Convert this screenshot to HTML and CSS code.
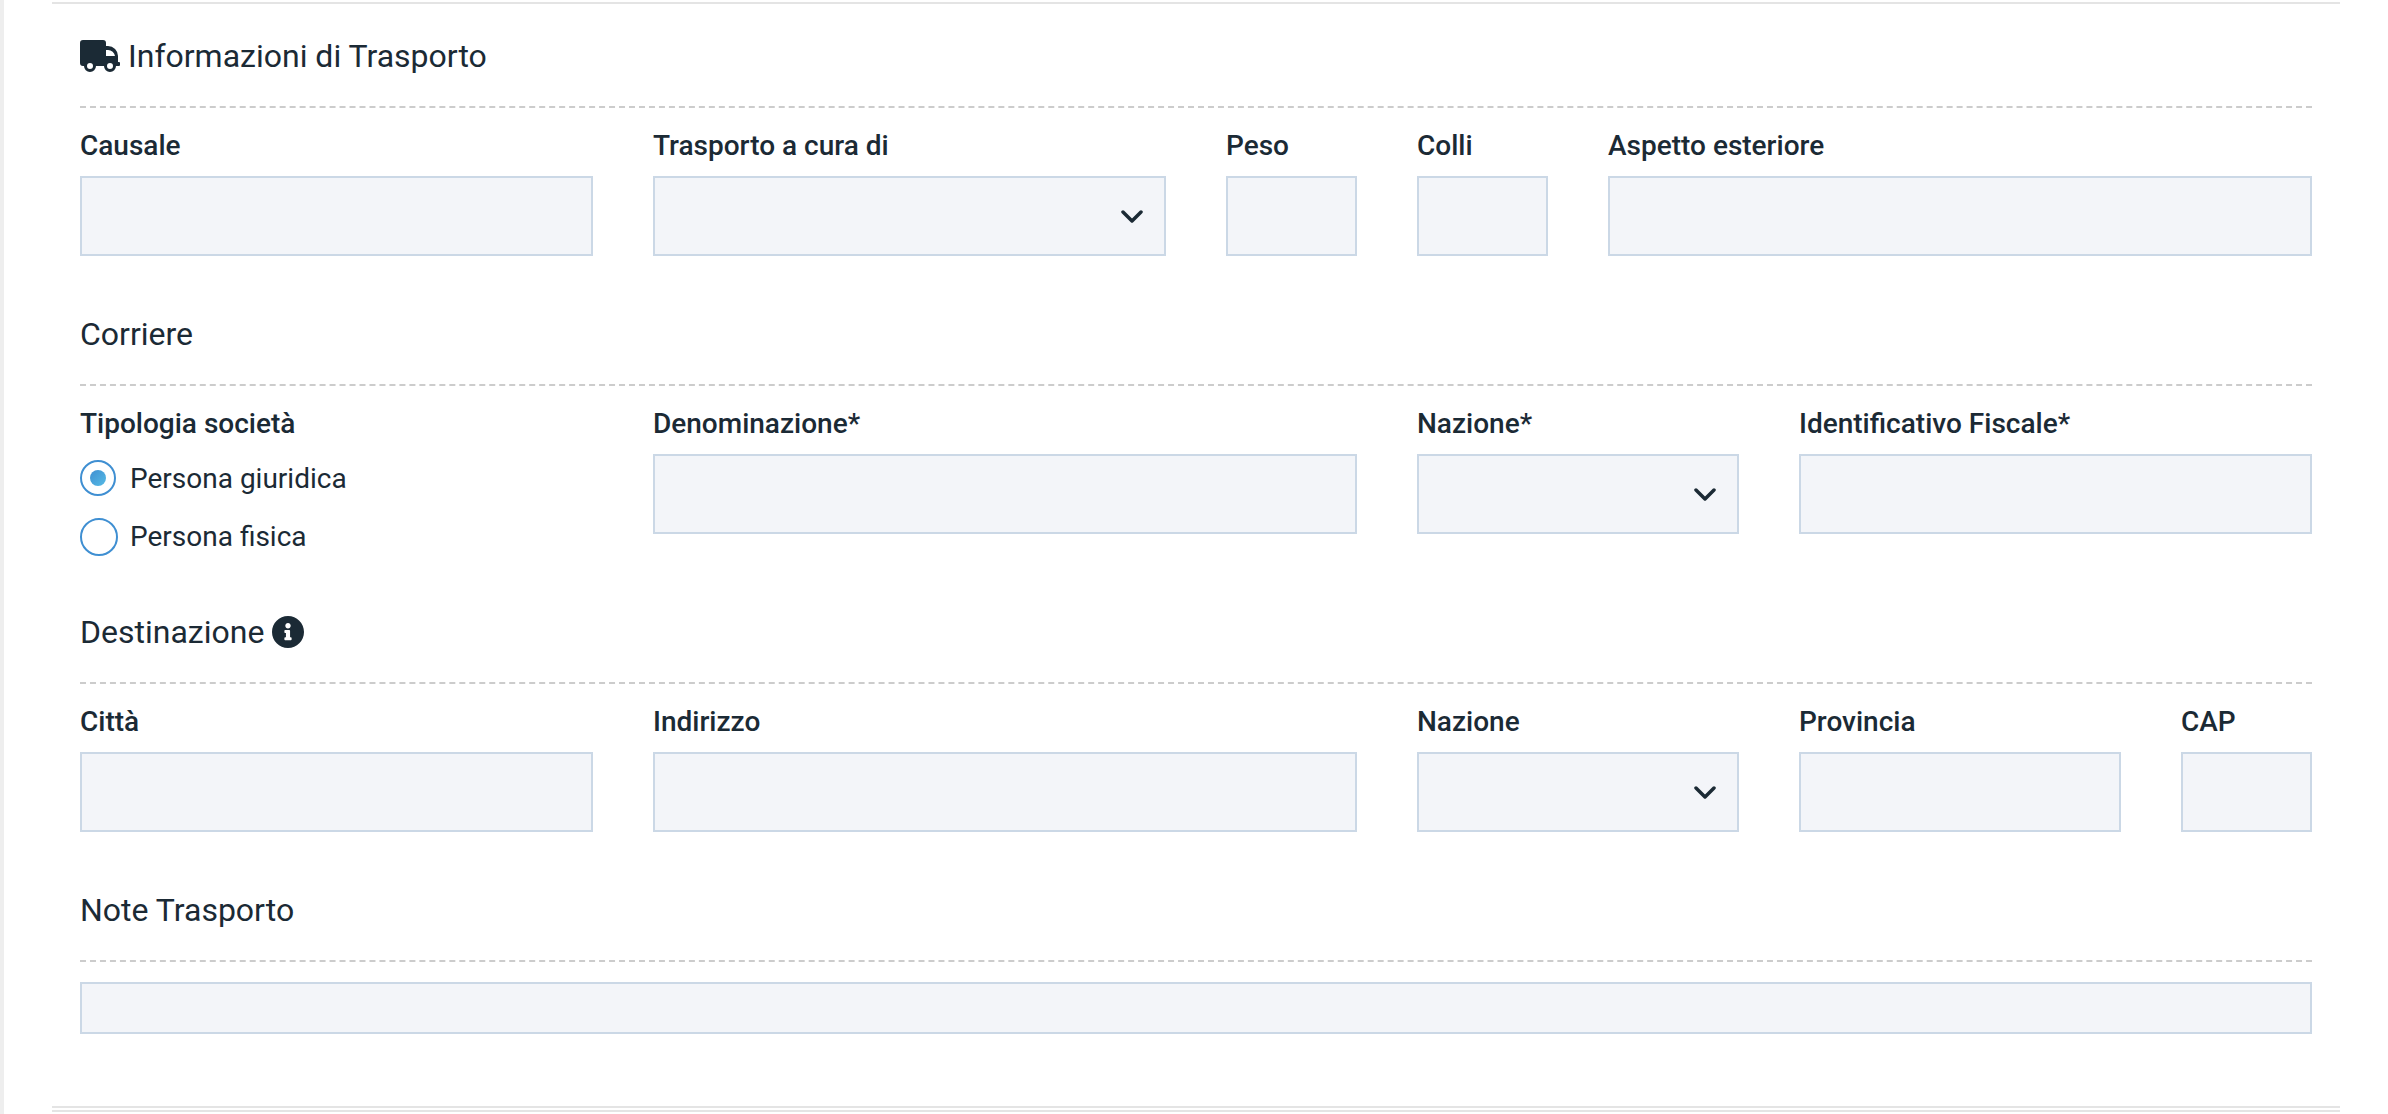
FILE: index.html
```html
<!DOCTYPE html>
<html lang="it">
	<head>
		<meta charset="utf-8">
		<meta name="viewport" content="width=device-width, initial-scale=1">
		<title>Informazioni di Trasporto</title>
		<link rel="stylesheet" href="styles.css">
	</head>
	<body>
		<form class="panel">
			<section class="section">
				<h2 class="section-title">
					<svg class="icon-truck" viewBox="0 0 40 32" aria-hidden="true">
						<path fill-rule="evenodd" d="M3 0H23a3 3 0 0 1 3 3V6H28a10 10 0 0 1 10 10V22H39a1 1 0 0 1 1 1V25a1 1 0 0 1-1 1H36a6 6 0 0 1-12 0H16a6 6 0 0 1-12 0H3a3 3 0 0 1-3-3V3a3 3 0 0 1 3-3zM26 10V16H35a7 7 0 0 0-7-6zM10 23a3 3 0 1 0 0 6 3 3 0 0 0 0-6zM30 23a3 3 0 1 0 0 6 3 3 0 0 0 0-6z"/>
					</svg>
					Informazioni di Trasporto
				</h2>
				<div class="fields">
					<div class="field col-3">
						<label for="causale">Causale</label>
						<input type="text" id="causale">
					</div>
					<div class="field col-3">
						<label for="trasporto">Trasporto a cura di</label>
						<div class="select">
							<select id="trasporto"><option></option></select>
							<svg viewBox="0 0 22 14" aria-hidden="true"><path d="M2 2l9 9 9-9"/></svg>
						</div>
					</div>
					<div class="field col-1">
						<label for="peso">Peso</label>
						<input type="text" id="peso">
					</div>
					<div class="field col-1">
						<label for="colli">Colli</label>
						<input type="text" id="colli">
					</div>
					<div class="field col-4">
						<label for="aspetto">Aspetto esteriore</label>
						<input type="text" id="aspetto">
					</div>
				</div>
			</section>

			<section class="section">
				<h2 class="section-title">Corriere</h2>
				<div class="fields">
					<fieldset class="field col-3">
						<legend>Tipologia società</legend>
						<div class="radios">
							<label class="radio"><span class="radio-box"><input type="radio" name="tipologia" checked></span>Persona giuridica</label>
							<label class="radio"><span class="radio-box"><input type="radio" name="tipologia"></span>Persona fisica</label>
						</div>
					</fieldset>
					<div class="field col-4">
						<label for="denominazione">Denominazione*</label>
						<input type="text" id="denominazione">
					</div>
					<div class="field col-2">
						<label for="nazione-corriere">Nazione*</label>
						<div class="select">
							<select id="nazione-corriere"><option></option></select>
							<svg viewBox="0 0 22 14" aria-hidden="true"><path d="M2 2l9 9 9-9"/></svg>
						</div>
					</div>
					<div class="field col-3">
						<label for="identificativo">Identificativo Fiscale*</label>
						<input type="text" id="identificativo">
					</div>
				</div>
			</section>

			<section class="section">
				<h2 class="section-title">
					Destinazione
					<svg class="icon-info" viewBox="8 8 496 496" aria-hidden="true">
						<path d="M256 8C119 8 8 119 8 256s111 248 248 248 248-111 248-248S393 8 256 8zm0 110c23 0 42 19 42 42s-19 42-42 42-42-19-42-42 19-42 42-42zm56 254c0 7-5 12-12 12h-88c-7 0-12-5-12-12v-24c0-7 5-12 12-12h12v-64h-12c-7 0-12-5-12-12v-24c0-7 5-12 12-12h64c7 0 12 5 12 12v100h12c7 0 12 5 12 12v24z"/>
					</svg>
				</h2>
				<div class="fields">
					<div class="field col-3">
						<label for="citta">Città</label>
						<input type="text" id="citta">
					</div>
					<div class="field col-4">
						<label for="indirizzo">Indirizzo</label>
						<input type="text" id="indirizzo">
					</div>
					<div class="field col-2">
						<label for="nazione">Nazione</label>
						<div class="select">
							<select id="nazione"><option></option></select>
							<svg viewBox="0 0 22 14" aria-hidden="true"><path d="M2 2l9 9 9-9"/></svg>
						</div>
					</div>
					<div class="field col-2">
						<label for="provincia">Provincia</label>
						<input type="text" id="provincia">
					</div>
					<div class="field col-1">
						<label for="cap">CAP</label>
						<input type="text" id="cap">
					</div>
				</div>
			</section>

			<section class="section">
				<h2 class="section-title" id="note-title">Note Trasporto</h2>
				<textarea class="note" rows="1" aria-labelledby="note-title"></textarea>
			</section>
		</form>
	</body>
</html>
```
FILE: styles.css
```css
* { box-sizing: border-box; }
body {
	margin: 0;
	padding: 2px 48px 0;
	min-height: 100vh;
	border-left: 4px solid #eee;
	background: #fff;
	color: #1b2a35;
	font-family: Roboto, 'Liberation Sans', sans-serif;
	font-size: 28px;
}

.panel {
	padding: 32px 28px 72px;
	border-top: 2px solid #e4e4e4;
	border-bottom: 6px double #e4e4e4;
}
.section + .section { margin-top: 58px; }
.section-title {
	display: flex;
	align-items: center;
	gap: 8px;
	margin: 0 0 20px;
	padding-bottom: 30px;
	border-bottom: 2px dashed #ccc;
	font-size: 32px;
	font-weight: 400;
	line-height: 40px;
}
.section-title svg { fill: currentColor; }
.icon-truck { width: 40px; height: 32px; }
.icon-info { width: 32px; height: 32px; }

.fields {
	display: grid;
	grid-template-columns: repeat(12, 1fr);
	column-gap: 60px;
}
.col-1 { grid-column: span 1; }
.col-2 { grid-column: span 2; }
.col-3 { grid-column: span 3; }
.col-4 { grid-column: span 4; }

.field {
	min-width: 0;
	margin: 0;
	padding: 0;
	border: none;
}
.field > label, legend {
	display: block;
	margin-bottom: 12px;
	padding: 0;
	font-weight: 500;
	line-height: 36px;
	white-space: nowrap;
}
input[type=text], select, textarea {
	display: block;
	width: 100%;
	height: 80px;
	margin: 0;
	padding: 0 20px;
	border: 2px solid #cbd8e6;
	border-radius: 0;
	background: #f3f5f9;
	color: inherit;
	font: inherit;
	appearance: none;
}
textarea.note {
	height: 52px;
	padding: 8px 20px;
	line-height: 32px;
	resize: none;
}

.select { position: relative; }
.select svg {
	position: absolute;
	right: 23px; top: 34px;
	width: 22px; height: 14px;
	fill: none;
	stroke: currentColor;
	stroke-width: 3.5;
	stroke-linecap: round;
	stroke-linejoin: round;
	pointer-events: none;
}

.radios {
	display: flex;
	flex-direction: column;
	gap: 22px;
	padding-top: 6px;
}
.radio {
	display: flex;
	gap: 12px;
	height: 36px;
	line-height: 38px;
}
.radio-box { width: 38px; }
.radio input {
	display: grid;
	place-items: center;
	width: 38px; height: 38px;
	margin: 0;
	border: 2px solid #3f8fd2;
	border-radius: 50%;
	appearance: none;
}
.radio input:checked { width: 36px; height: 36px; }
.radio input:checked::before {
	content: "";
	width: 16px; height: 16px;
	border-radius: 50%;
	background: linear-gradient(135deg, #3f8fd2, #56bbe5);
}
```
